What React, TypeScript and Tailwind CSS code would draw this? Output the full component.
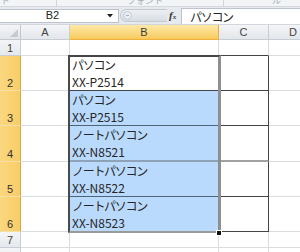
import React from 'react';

const sans = '[font-family:"Liberation_Sans",Arial,sans-serif]';
const jp = '[font-family:"Noto_Sans_CJK_JP","Noto_Sans",sans-serif]';

type Row = { no: number; h: string; sel: boolean; cells?: [string, string]; active?: boolean; thick?: boolean };

const rows: Row[] = [
  { no: 1, h: 'h-[16px]', sel: false },
  { no: 2, h: 'h-[35px]', sel: true, cells: ['パソコン', 'XX-P2514'], active: true },
  { no: 3, h: 'h-[35px]', sel: true, cells: ['パソコン', 'XX-P2515'] },
  { no: 4, h: 'h-[36px]', sel: true, cells: ['ノートパソコン', 'XX-N8521'], thick: true },
  { no: 5, h: 'h-[35px]', sel: true, cells: ['ノートパソコン', 'XX-N8522'] },
  { no: 6, h: 'h-[35px]', sel: true, cells: ['ノートパソコン', 'XX-N8523'] },
  { no: 7, h: 'h-[16px]', sel: false },
  { no: 8, h: 'h-[16px]', sel: false },
];

function RibbonStrip() {
  return (
    <div className="flex h-[7px] items-end overflow-hidden border-b border-[#d3d8de] bg-[#f2f4f6] text-[9px] leading-[11px] text-[#a9afb7]">
      <span className={`${jp} w-[57px] shrink-0 border-r border-[#d0d5db] pl-[1px]`}>クリップボード</span>
      <span className={`${jp} w-[167px] shrink-0 border-r border-[#d0d5db] pl-[70px]`}>フォント</span>
      <span className={`${jp} pl-[48px]`}>スタイル</span>
    </div>
  );
}

function FormulaBar() {
  return (
    <div className="flex h-[17px] items-center bg-[#e6e9ee]">
      <div className="flex h-[14px] w-[119px] shrink-0 items-center border-y border-r border-[#bcc3cc] bg-white">
        <span className={`${sans} w-[105px] text-center text-[11px] leading-none text-[#222]`}>B2</span>
        <svg width="6" height="4" viewBox="0 0 6 4" className="ml-[2px]">
          <path d="M0 0h6L3 3.5z" fill="#222" />
        </svg>
      </div>
      <div className="ml-[1px] flex h-[13px] w-[47px] shrink-0 items-center rounded-l-full border border-r-0 border-[#c3c9d1] bg-gradient-to-b from-[#eef0f3] to-[#d8dde3] pl-[2px]">
        <div className="flex h-[9px] w-[9px] items-center justify-center rounded-full border border-[#c4cad2] bg-[#e9ecf0]">
          <div className="h-px w-[3px] bg-[#aab1ba]" />
        </div>
      </div>
      <span className="ml-[2px] w-[12px] shrink-0 text-[11px] font-bold italic leading-none text-[#333] [font-family:'Liberation_Serif',serif]">
        f<span className="text-[7px]">x</span>
      </span>
      <div className="flex h-[16px] flex-1 items-center self-start border-l border-t border-[#bcc3cc] bg-white pl-[8px] mt-[1px]">
        <span className={`${jp} text-[12px] leading-none tracking-[-1.3px] text-[#262626]`}>パソコン</span>
      </div>
    </div>
  );
}

function ColumnHeader() {
  const base = `${sans} flex items-center justify-center border-r border-b text-[11px] leading-none`;
  return (
    <div className="flex h-[16px] border-t border-[#d2d6dc]">
      <div className="relative w-[21px] shrink-0 border-r border-b border-[#c3c8cf] bg-gradient-to-b from-[#f4f5f7] to-[#e3e6ea]">
        <svg width="8" height="8" viewBox="0 0 8 8" className="absolute bottom-[2px] right-[2px]">
          <path d="M8 0v8H0z" fill="#c6cbd1" />
        </svg>
      </div>
      <div className={`${base} w-[49px] shrink-0 border-[#c8cdd3] bg-gradient-to-b from-[#f4f5f7] to-[#e3e6ea] text-[#444]`}>A</div>
      <div className={`${base} w-[149px] shrink-0 border-r-[#e2b04a] border-b-[#f0b23a] bg-gradient-to-b from-[#fde9a6] to-[#f8cb5c] text-[#3a3a3a]`}>B</div>
      <div className={`${base} w-[50px] shrink-0 border-[#c8cdd3] bg-gradient-to-b from-[#f4f5f7] to-[#e3e6ea] text-[#444]`}>C</div>
      <div className={`${base} w-[49px] shrink-0 border-[#c8cdd3] bg-gradient-to-b from-[#f4f5f7] to-[#e3e6ea] text-[#444]`}>D</div>
    </div>
  );
}

function SheetRow({ row, prevBordered }: { row: Row; prevBordered: boolean }) {
  const inRange = !!row.cells;
  const nextIsRange = row.no === 1;
  const head = row.sel
    ? 'border-r-[#e0a53c] border-b-[#f6dfa6] bg-gradient-to-r from-[#fad77f] to-[#f8cd65] text-[#333]'
    : 'border-[#c8cdd3] bg-gradient-to-b from-[#f4f5f7] to-[#e5e8ec] text-[#444]';

  let bB = 'border-[#dadcdd]';
  let bC = 'border-[#dadcdd]';
  let bA = 'border-[#dadcdd]';
  if (nextIsRange) {
    bB = 'border-r-[#dadcdd] border-b-[#444]';
    bC = 'border-r-[#dadcdd] border-b-[#444]';
  }
  if (inRange) {
    bA = 'border-r-[#444] border-b-[#dadcdd]';
    bB = row.thick ? 'border-r-[#444] border-b-2 border-b-[#8ea3b8]' : row.active ? 'border-[#444]' : 'border-[#4f6478]';
    bC = row.thick ? 'border-r-[#444] border-b-2 border-b-[#a2a2a2]' : 'border-[#444]';
  }
  void prevBordered;

  return (
    <div className={`flex ${row.h}`}>
      <div className={`${sans} flex w-[21px] shrink-0 items-end justify-center border-r border-b pb-[1px] text-[11px] leading-[12px] ${head}`}>
        {row.no}
      </div>
      <div className={`w-[49px] shrink-0 border-r border-b bg-white ${bA}`} />
      <div
        className={`${jp} flex w-[149px] shrink-0 flex-col justify-end overflow-hidden border-r border-b pl-[2px] text-[12px] leading-[17px] text-[#262626] ${bB} ${
          inRange && !row.active ? 'bg-[#badafd]' : 'bg-white'
        }`}
      >
        {row.cells && (
          <>
            <span className="whitespace-nowrap tracking-[-1.3px]">{row.cells[0]}</span>
            <span className="whitespace-nowrap">{row.cells[1]}</span>
          </>
        )}
      </div>
      <div className={`w-[50px] shrink-0 border-r border-b bg-white ${bC}`} />
      <div className="w-[49px] shrink-0 border-r border-b border-[#dadcdd] bg-white" />
    </div>
  );
}

export default function App() {
  return (
    <div className="relative h-[252px] w-[300px] overflow-hidden bg-white">
      <RibbonStrip />
      <FormulaBar />
      <div className="relative">
        <ColumnHeader />
        {rows.map((r, i) => (
          <SheetRow key={r.no} row={r} prevBordered={i > 0} />
        ))}
        {/* selection outline B2:B6 and fill handle */}
        <div className="pointer-events-none absolute left-[68px] top-[31px] h-[178px] w-[153px] border-l-2 border-t-2 border-r-[3px] border-b-2 border-l-[#4a4a4a] border-t-[#454545] border-r-[#8f8f8f] border-b-[#9a9a9a]" />
        <div className="pointer-events-none absolute left-[216px] top-[206px] h-[6px] w-[6px] border border-white bg-[#111]" />
      </div>
    </div>
  );
}
